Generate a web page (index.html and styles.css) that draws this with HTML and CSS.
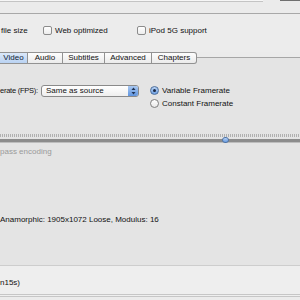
FILE: index.html
```html
<!DOCTYPE html>
<html lang="en">
<head>
    <meta charset="UTF-8">
    <title>Output Settings</title>
    <link rel="stylesheet" href="styles.css">
</head>
<body>

    <div class="window">
        <!-- destination field strip -->
        <div class="toolbar">
            <div class="field"></div>
            <div class="field-btn"></div>
        </div>

        <!-- format options -->
        <div class="options">
            <label class="opt opt-first">file size</label>
            <label class="opt opt-web"><span class="check"></span>Web optimized</label>
            <label class="opt"><span class="check"></span>iPod 5G support</label>
        </div>

        <!-- tab strip -->
        <div class="tabs">
            <div class="tab tab-video selected">Video</div>
            <div class="tab tab-audio">Audio</div>
            <div class="tab tab-subs">Subtitles</div>
            <div class="tab tab-adv">Advanced</div>
            <div class="tab tab-chap">Chapters</div>
        </div>

        <div class="tabbox">
            <div class="fps-row">
                <span class="fps-label">erate (FPS):</span>
                <div class="popup">
                    <span class="popup-text">Same as source</span>
                    <span class="stepper">
                        <svg width="9" height="10" viewBox="0 0 9 10">
                            <path d="M4.5 1.5 L6.5 4 L2.5 4 Z" fill="#1f3152"/>
                            <path d="M4.5 8.5 L6.5 6 L2.5 6 Z" fill="#1f3152"/>
                        </svg>
                    </span>
                </div>
                <div class="radios">
                    <label class="radio-row"><span class="radio on"></span>Variable Framerate</label>
                    <label class="radio-row"><span class="radio"></span>Constant Framerate</label>
                </div>
            </div>

            <!-- quality slider -->
            <div class="slider">
                <div class="ticks"></div>
                <div class="track"></div>
                <div class="knob"></div>
            </div>

            <div class="twopass">pass encoding</div>

            <div class="summary">Anamorphic: 1905x1072 Loose, Modulus: 16</div>
        </div>

        <div class="status"><span class="status-text">n15s)</span></div>
        <div class="drawer-edge"></div>
    </div>

</body>
</html>
```

FILE: styles.css
```css
body {
    margin: 0;
    padding: 0;
    background-color: #ececec;
}

.window {
    width: 300px;
    height: 300px;
    overflow: hidden;
    background-color: #ebebeb;
    font-family: 'Liberation Sans', Arial, sans-serif;
    font-size: 8px;
    color: #111111;
}

.toolbar {
    height: 13px;
    display: flex;
    border-bottom: 1px solid #a8a8a8;
    box-sizing: content-box;
}

.field {
    width: 263px;
    height: 1px;
    background-color: #f6f6f6;
    border-bottom: 1px solid #c4c4c4;
}

.field-btn {
    width: 20px;
    height: 1px;
    margin-left: auto;
    background-color: #707070;
}

.options {
    height: 38px;
    padding-top: 11px;
    box-sizing: border-box;
    display: flex;
    background-color: #ececec;
}

.opt {
    display: flex;
    align-items: center;
    height: 10px;
    white-space: nowrap;
}

.opt-first {
    width: 42px;
    padding-left: 1px;
}

.opt-web {
    width: 94px;
}

.check {
    width: 9px;
    height: 9px;
    box-sizing: border-box;
    border: 1px solid #8c8c8c;
    border-radius: 2px;
    background: linear-gradient(#ffffff, #ececec);
    margin-right: 3px;
    flex-shrink: 0;
}

.tabs {
    position: relative;
    z-index: 1;
    display: flex;
    height: 12px;
    margin-bottom: -7px;
}

.tab {
    height: 12px;
    box-sizing: border-box;
    border: 1px solid #929292;
    border-left: none;
    background: linear-gradient(#fdfdfd, #ebebeb);
    line-height: 10px;
    text-align: center;
    white-space: nowrap;
}

.tab.selected {
    background: linear-gradient(#dbe8f9, #b9d2f2);
    color: #0f1d33;
}

.tab-video { width: 28px; }
.tab-audio { width: 35px; }
.tab-subs { width: 42px; }
.tab-adv { width: 47px; }
.tab-chap {
    width: 45px;
    border-radius: 0 3px 3px 0;
}

.tabbox {
    height: 208px;
    box-sizing: border-box;
    border-top: 1px solid #a6a6a6;
    background-color: #e4e4e4;
    padding-top: 27px;
}

.fps-row {
    display: flex;
    align-items: flex-start;
}

.fps-label {
    width: 38px;
    font-size: 7.5px;
    letter-spacing: -0.25px;
    line-height: 12px;
    white-space: nowrap;
}

.popup {
    width: 98px;
    height: 12px;
    margin-left: 3px;
    box-sizing: border-box;
    border: 1px solid #8a8a8a;
    border-radius: 3px;
    background: linear-gradient(#ffffff, #eeeeee);
    display: flex;
    align-items: center;
}

.popup-text {
    padding-left: 4px;
    line-height: 10px;
    flex: 1;
}

.stepper {
    width: 10px;
    height: 10px;
    border-radius: 0 2px 2px 0;
    background: linear-gradient(#a9c8f1, #5f95e0);
    display: flex;
    align-items: center;
    justify-content: center;
}

.radios {
    margin-left: 11px;
    margin-top: -1px;
    display: flex;
    flex-direction: column;
}

.radio-row {
    display: flex;
    align-items: center;
    height: 13px;
    white-space: nowrap;
}

.radio {
    width: 9px;
    height: 9px;
    box-sizing: border-box;
    border: 1px solid #7f7f7f;
    border-radius: 50%;
    background: linear-gradient(#ffffff, #e8e8e8);
    margin-right: 3px;
    display: flex;
    align-items: center;
    justify-content: center;
}

.radio.on {
    border-color: #4d6f9c;
    background: linear-gradient(#b8d2f4, #6d9fe2);
}

.radio.on::after {
    content: '';
    width: 3px;
    height: 3px;
    border-radius: 50%;
    background-color: #1a2740;
}

.slider {
    position: relative;
    margin-top: 24px;
}

.ticks {
    height: 3px;
    background: repeating-linear-gradient(90deg, #b0b0b0 0, #b0b0b0 1px, transparent 1px, transparent 2px);
}

.track {
    height: 3px;
    margin-top: 2px;
    background-color: #8c8c8c;
    border-bottom: 1px solid #bdbdbd;
}

.knob {
    position: absolute;
    left: 222px;
    top: 3px;
    width: 7px;
    height: 6px;
    box-sizing: border-box;
    border: 1px solid #4f75a8;
    border-radius: 3px;
    background: linear-gradient(#b5d0f5, #6a9de2);
}

.twopass {
    margin-top: 4px;
    line-height: 10px;
    color: #9a9a9a;
}

.summary {
    margin-top: 58px;
    line-height: 10px;
    white-space: nowrap;
}

.status {
    height: 29px;
    box-sizing: border-box;
    border-top: 1px solid #cdcdcd;
    background-color: #eeeeee;
    padding-top: 12px;
}

.status-text {
    display: block;
    line-height: 10px;
}

.drawer-edge {
    height: 1px;
    border-top: 1px solid #c6c6c6;
    border-bottom: 1px solid #c6c6c6;
    background-color: #efefef;
}
```
